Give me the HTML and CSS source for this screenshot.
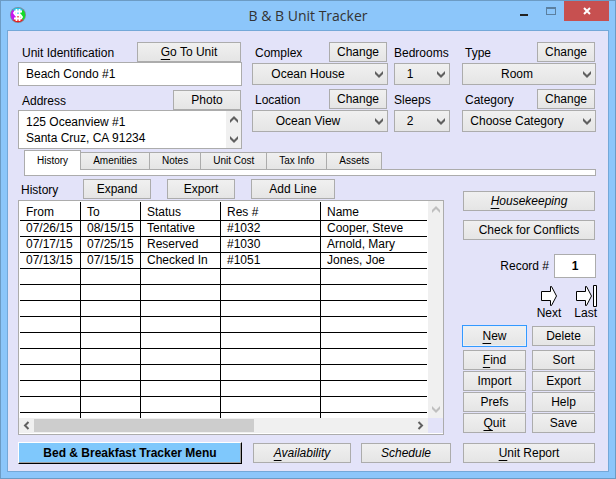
FILE: index.html
```html
<!DOCTYPE html>
<html lang="en">
<head>
    <title>B &amp; B Unit Tracker</title>
    <meta charset="UTF-8">
    <link rel="stylesheet" href="styles.css">
</head>
<body>
    <svg width="0" height="0" class="defs">
        <symbol id="chev-down" viewBox="0 0 8 7"><path d="M0 0l4 4 4-4v3L4 7 0 3z"/></symbol>
        <symbol id="chev-up" viewBox="0 0 8 7"><path d="M0 7l4-4 4 4V4L4 0 0 4z"/></symbol>
    </svg>

    <div class="window">
        <header class="titlebar">
            <svg class="app-icon" viewBox="0 0 16 16">
                <circle cx="8" cy="8" r="8" fill="#7d8a98"/>
                <path d="M8 8L2.500 3A7.300 7.300 0 0 1 13 3z" fill="#22c8e8"/>
                <path d="M8 8l5-5.300a7.300 7.300 0 0 1 0 10.600z" fill="#12dc28"/>
                <path d="M8 8l5 5.300a7.300 7.300 0 0 1-10 0z" fill="#ec1c1c"/>
                <path d="M8 8l-5 5.300A7.300 7.300 0 0 1 3 2.700z" fill="#c814f0"/>
                <path d="M12 4.500H5l-1 1.500L5.500 8h5L12 10l-1 1.500H4M6.500 2v12M9.500 2v12" fill="none" stroke="#fff" stroke-width="1.800"/>
            </svg>
            <h1>B &amp; B Unit Tracker</h1>
            <div class="window-buttons">
                <button class="win-btn" aria-label="Minimize"><svg width="8" height="12"><path d="M0 9h8v2H0z" fill="#222"/></svg></button>
                <button class="win-btn" aria-label="Maximize"><svg width="10" height="8"><path d="M0 0h10v8H0zM1 2v5h8V2z" fill="#5b7f9f" fill-rule="evenodd"/></svg></button>
                <button class="win-btn close" aria-label="Close"><svg width="8" height="8"><path d="M1 1l6 6M7 1L1 7" stroke="#fff" stroke-width="2"/></svg></button>
            </div>
        </header>

        <main class="client">
            <section class="fields">
                <div class="stack">
                    <div>
                        <div class="field-head">
                            <label for="unit">Unit Identification</label>
                            <button class="btn wide"><u>G</u>o To Unit</button>
                        </div>
                        <input class="text-box" id="unit" type="text" value="Beach Condo #1">
                    </div>
                    <div>
                        <div class="field-head">
                            <label for="address">Address</label>
                            <button class="btn medium">Photo</button>
                        </div>
                        <div class="address-box">
                            <textarea id="address" rows="2">125 Oceanview #1
Santa Cruz, CA 91234</textarea>
                            <div class="scroll-v">
                                <svg class="chev"><use href="#chev-up"/></svg>
                                <svg class="chev"><use href="#chev-down"/></svg>
                            </div>
                        </div>
                    </div>
                </div>

                <div class="place">
                    <div class="stack">
                        <div class="choice">
                            <div class="field-head">
                                <label for="complex">Complex</label>
                                <button class="btn">Change</button>
                            </div>
                            <div class="select-box">
                                <select id="complex"><option>Ocean House</option></select>
                                <svg class="chev"><use href="#chev-down"/></svg>
                            </div>
                        </div>
                        <div class="choice">
                            <div class="field-head">
                                <label for="location">Location</label>
                                <button class="btn">Change</button>
                            </div>
                            <div class="select-box">
                                <select id="location"><option>Ocean View</option></select>
                                <svg class="chev"><use href="#chev-down"/></svg>
                            </div>
                        </div>
                    </div>
                    <div class="stack narrow">
                        <div class="choice">
                            <div class="field-head"><label for="bedrooms">Bedrooms</label></div>
                            <div class="select-box">
                                <select id="bedrooms"><option>1</option></select>
                                <svg class="chev"><use href="#chev-down"/></svg>
                            </div>
                        </div>
                        <div class="choice">
                            <div class="field-head"><label for="sleeps">Sleeps</label></div>
                            <div class="select-box">
                                <select id="sleeps"><option>2</option></select>
                                <svg class="chev"><use href="#chev-down"/></svg>
                            </div>
                        </div>
                    </div>
                </div>

                <div class="stack">
                    <div class="choice">
                        <div class="field-head">
                            <label for="type">Type</label>
                            <button class="btn">Change</button>
                        </div>
                        <div class="select-box">
                            <select id="type"><option>Room</option></select>
                            <svg class="chev"><use href="#chev-down"/></svg>
                        </div>
                    </div>
                    <div class="choice">
                        <div class="field-head">
                            <label for="category">Category</label>
                            <button class="btn">Change</button>
                        </div>
                        <div class="select-box">
                            <select id="category"><option>Choose Category</option></select>
                            <svg class="chev"><use href="#chev-down"/></svg>
                        </div>
                    </div>
                </div>
            </section>

            <nav class="tabs">
                <button class="tab active">History</button>
                <button class="tab">Amenities</button>
                <button class="tab">Notes</button>
                <button class="tab">Unit Cost</button>
                <button class="tab">Tax Info</button>
                <button class="tab">Assets</button>
            </nav>
            <div class="tab-strip"></div>

            <div class="body">
                <section class="history">
                    <div class="history-head">
                        <h2>History</h2>
                        <button class="btn medium">Expand</button>
                        <button class="btn medium">Export</button>
                        <button class="btn large">Add Line</button>
                    </div>
                    <div class="list">
                        <table>
                            <thead>
                                <tr><th class="date first">From</th><th class="date">To</th><th class="status">Status</th><th class="res">Res #</th><th>Name</th></tr>
                            </thead>
                            <tbody>
                                <tr><td>07/26/15</td><td>08/15/15</td><td>Tentative</td><td>#1032</td><td>Cooper, Steve</td></tr>
                                <tr><td>07/17/15</td><td>07/25/15</td><td>Reserved</td><td>#1030</td><td>Arnold, Mary</td></tr>
                                <tr><td>07/13/15</td><td>07/15/15</td><td>Checked In</td><td>#1051</td><td>Jones, Joe</td></tr>
                                <tr><td></td><td></td><td></td><td></td><td></td></tr>
                                <tr><td></td><td></td><td></td><td></td><td></td></tr>
                                <tr><td></td><td></td><td></td><td></td><td></td></tr>
                                <tr><td></td><td></td><td></td><td></td><td></td></tr>
                                <tr><td></td><td></td><td></td><td></td><td></td></tr>
                                <tr><td></td><td></td><td></td><td></td><td></td></tr>
                                <tr><td></td><td></td><td></td><td></td><td></td></tr>
                                <tr><td></td><td></td><td></td><td></td><td></td></tr>
                                <tr><td></td><td></td><td></td><td></td><td></td></tr>
                                <tr class="cut"><td></td><td></td><td></td><td></td><td></td></tr>
                            </tbody>
                        </table>
                        <div class="scroll-v idle">
                            <svg class="chev"><use href="#chev-up"/></svg>
                            <svg class="chev"><use href="#chev-down"/></svg>
                        </div>
                        <div class="scroll-h">
                            <svg width="7" height="9"><path d="M5.500 1L2 4.500 5.500 8" fill="none" stroke="#606060" stroke-width="2"/></svg>
                            <div class="track"><div class="thumb"></div></div>
                            <svg width="7" height="9"><path d="M1.500 1L5 4.500 1.500 8" fill="none" stroke="#606060" stroke-width="2"/></svg>
                        </div>
                        <div class="corner"></div>
                    </div>
                </section>

                <aside class="side">
                    <button class="btn italic"><u>H</u>ousekeeping</button>
                    <button class="btn">Check for Conflicts</button>
                    <div class="record">
                        <label for="record">Record #</label>
                        <input class="text-box" id="record" type="text" value="1">
                    </div>
                    <div class="pager">
                        <button class="page-btn">
                            <svg width="18" height="22"><path d="M1.500 6.500h9v-5h1l5 9.500-5 9.500h-1v-5h-9z"/></svg>
                            Next
                        </button>
                        <button class="page-btn">
                            <svg width="22" height="22"><path d="M1.500 6.500h9v-5h1l5 9.500-5 9.500h-1v-5h-9zM18.500.500h3v21h-3z"/></svg>
                            Last
                        </button>
                    </div>
                    <div class="commands">
                        <button class="btn default"><u>N</u>ew</button>
                        <button class="btn">Delete</button>
                        <button class="btn"><u>F</u>ind</button>
                        <button class="btn">Sort</button>
                        <button class="btn">Import</button>
                        <button class="btn">Export</button>
                        <button class="btn">Prefs</button>
                        <button class="btn">Help</button>
                        <button class="btn"><u>Q</u>uit</button>
                        <button class="btn">Save</button>
                    </div>
                </aside>
            </div>

            <footer class="footer">
                <button class="menu-btn">Bed &amp; Breakfast Tracker Menu</button>
                <button class="btn italic availability"><u>A</u>vailability</button>
                <button class="btn italic schedule">Schedule</button>
                <button class="btn report"><u>U</u>nit Report</button>
            </footer>
        </main>
    </div>
</body>
</html>
```
FILE: styles.css
```css
:root {
    --frame: #8cc6fa;
    --frame-line: #6c9bc4;
    --panel: #e3e3f9;
    --line: #acacac;
    --blue: #3399ff;
}

* {
    margin: 0;
    padding: 0;
    box-sizing: border-box;
}

body,
button,
input,
select,
textarea {
    font-family: "Liberation Sans", Arial, sans-serif;
    font-size: 12px;
    line-height: 16px;
    color: #000;
}

.defs {
    position: absolute;
}

.window {
    min-height: 100vh;
    display: flex;
    flex-direction: column;
    background: var(--frame);
    border: 1px solid var(--frame-line);
    padding: 0 6px 6px;
}

/* title bar */
.titlebar {
    display: grid;
    grid-template-columns: 100px 1fr 100px;
    height: 29px;
}

.app-icon {
    width: 16px;
    height: 16px;
    margin: 6px 3px;
}

.titlebar h1 {
    font-family: "Open Sans", "Noto Sans", sans-serif;
    font-size: 14px;
    font-weight: 400;
    line-height: 29px;
    text-align: center;
    color: #333;
}

.window-buttons {
    display: flex;
    justify-content: flex-end;
    height: 20px;
}

.win-btn {
    width: 27px;
    border: none;
    background: none;
    display: flex;
    align-items: center;
    justify-content: center;
}

.win-btn.close {
    width: 45px;
    background: #c75050;
}

/* client area */
.client {
    flex: 1;
    background: var(--panel);
    border: 1px solid #74a8d8;
    padding: 11px 12px 7px 10px;
}

.btn {
    height: 20px;
    border: 1px solid var(--line);
    background: linear-gradient(#f0f0f0, #e5e5e5);
    line-height: 16px;
    text-align: center;
}

.btn u {
    text-underline-offset: 3px;
    text-decoration-thickness: 1px;
}

.btn.medium {
    width: 68px;
}

.btn.large {
    width: 84px;
}

.btn.wide {
    width: 104px;
}

.btn.italic {
    font-style: italic;
}

.fields {
    display: grid;
    grid-template-columns: 1fr 200px 134px;
    gap: 10px;
}

.stack {
    display: flex;
    flex-direction: column;
    gap: 4px;
}

.place {
    display: grid;
    grid-template-columns: 136px 56px;
    gap: 6px;
}

.field-head {
    display: flex;
    justify-content: space-between;
    height: 20px;
    padding: 0 1px 0 4px;
}

.choice .field-head {
    padding-left: 3px;
    margin-bottom: 1px;
}

.narrow .choice .field-head {
    padding: 0;
}

.field-head label {
    padding-top: 3px;
}

.choice .btn {
    width: 58px;
}

.text-box {
    display: block;
    width: 100%;
    height: 24px;
    border: 1px solid var(--line);
    background: #fff;
    padding: 0 7px;
}

.address-box {
    display: flex;
    height: 39px;
    border: 1px solid var(--line);
    background: #fff;
}

.address-box textarea {
    flex: 1;
    border: none;
    resize: none;
    overflow: hidden;
    padding: 3px 7px;
    outline: none;
}

.select-box {
    position: relative;
}

.select-box select {
    display: block;
    appearance: none;
    width: 100%;
    height: 22px;
    border: 1px solid var(--line);
    border-radius: 0;
    background: linear-gradient(#f0f0f0, #e5e5e5);
    padding-right: 24px;
    text-align-last: center;
}

.chev {
    width: 8px;
    height: 7px;
    fill: #606060;
}

.select-box .chev {
    position: absolute;
    right: 5px;
    top: 8px;
    pointer-events: none;
}

/* tabs */
.tabs {
    display: flex;
    align-items: flex-end;
    height: 20px;
    margin: 1px 0 0 6px;
}

.tab {
    height: 18px;
    border: 1px solid var(--line);
    border-left-width: 0;
    background: linear-gradient(#f0f0f0, #e5e5e5);
    padding: 0 12px;
    font-size: 10px;
    line-height: 16px;
}

.tab.active {
    position: relative;
    z-index: 1;
    height: 20px;
    border-left-width: 1px;
    border-bottom: none;
    background: #fff;
}

.tab-strip {
    height: 7px;
    margin: -1px 0 0 6px;
    background: #fff;
    border: 1px solid var(--line);
}

/* history list */
.body {
    display: grid;
    grid-template-columns: 1fr 134px;
    gap: 18px;
    margin-top: 3px;
}

.history-head {
    display: flex;
    gap: 16px;
    margin-bottom: 1px;
    padding-left: 3px;
}

.history-head h2 {
    width: 46px;
    padding-top: 3px;
    font-size: 12px;
    font-weight: 400;
}

.list {
    display: grid;
    grid-template-columns: 1fr 15px;
    grid-template-rows: auto 15px;
    border: 1px solid var(--line);
    background: #fff;
    padding-bottom: 1px;
}

.list table {
    width: calc(100% - 2px);
    margin: 1px 1px 0;
    border-spacing: 0;
    table-layout: fixed;
}

.list th,
.list td {
    height: 16px;
    border-right: 1px solid #000;
    border-bottom: 1px solid #000;
    padding-left: 6px;
    font-weight: 400;
    line-height: 15px;
    text-align: left;
    white-space: nowrap;
}

.list th {
    height: 19px;
    padding-top: 2px;
}

.list th:last-child,
.list td:last-child {
    border-right: none;
}

.list .cut td {
    height: 5px;
    border-bottom: none;
}

.list .date {
    width: 60px;
}

.list .first {
    width: 61px;
}

.list .status {
    width: 80px;
}

.list .res {
    width: 100px;
}

.scroll-v {
    width: 15px;
    display: flex;
    flex-direction: column;
    align-items: center;
    justify-content: space-between;
    padding: 5px 0;
    background: #f0f0f0;
}

.scroll-v.idle .chev {
    fill: #bfbfbf;
}

.scroll-h {
    display: flex;
    align-items: center;
    gap: 4px;
    height: 15px;
    padding: 0 4px;
    background: #f0f0f0;
}

.scroll-h svg {
    flex: none;
}

.track {
    flex: 1;
    height: 13px;
}

.thumb {
    width: 58%;
    height: 100%;
    background: #cdcdcd;
}

.corner {
    background: var(--panel);
}

/* right hand column */
.side {
    display: flex;
    flex-direction: column;
    padding: 12px 1px 0;
}

.side > .btn {
    margin-bottom: 9px;
}

.record {
    display: flex;
    align-items: center;
    justify-content: flex-end;
    gap: 5px;
    margin: 5px -1px 0 0;
}

.record .text-box {
    width: 42px;
    font-weight: 700;
    text-align: center;
}

.pager {
    display: flex;
    justify-content: flex-end;
    gap: 13px;
    margin: 7px -2px 0 0;
}

.page-btn {
    display: flex;
    flex-direction: column;
    align-items: center;
    border: none;
    background: none;
    line-height: 12px;
}

.page-btn svg {
    fill: #fff;
    stroke: #000;
}

.commands {
    display: grid;
    grid-template-columns: 1fr 1fr;
    gap: 1px 6px;
    margin-top: 7px;
}

.commands .btn:nth-child(-n+2) {
    margin-bottom: 3px;
}

.btn.default {
    outline: 1px solid var(--blue);
    border-color: #e8f0f8;
}

/* footer */
.footer {
    display: flex;
    align-items: center;
    margin-top: 7px;
}

.menu-btn {
    flex: 1;
    height: 22px;
    border: 1px solid;
    border-color: #fff #000 #000 #fff;
    box-shadow: inset -1px -1px #a0a0a0;
    background: #7fc8fc;
    font-weight: 700;
}

.availability {
    width: 98px;
    margin-left: 11px;
}

.schedule {
    width: 90px;
    margin-left: 10px;
}

.report {
    width: 132px;
    margin: 0 1px 0 12px;
}
```
